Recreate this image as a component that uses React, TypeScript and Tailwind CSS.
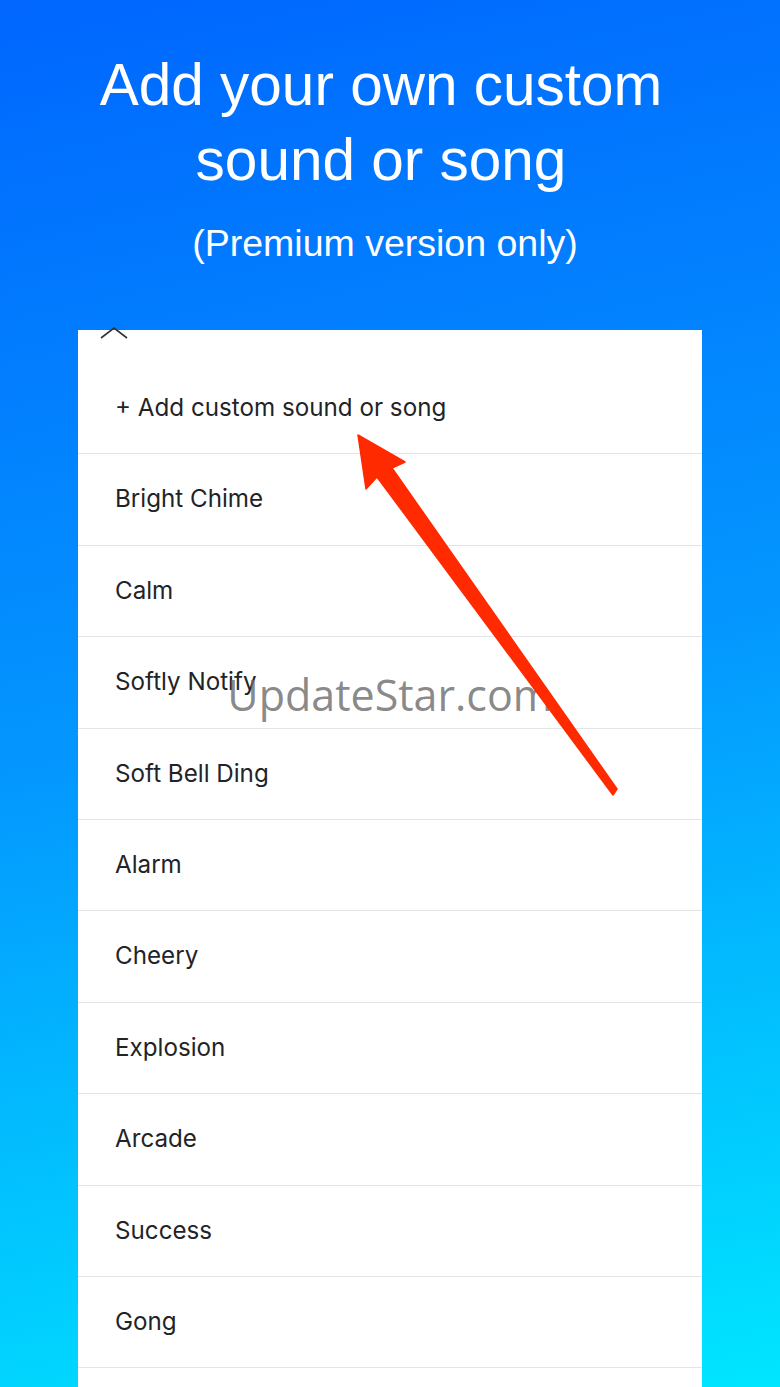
const sounds = [
  "Bright Chime",
  "Calm",
  "Softly Notify",
  "Soft Bell Ding",
  "Alarm",
  "Cheery",
  "Explosion",
  "Arcade",
  "Success",
  "Gong",
];

function Row({ label }: { label?: string }) {
  return (
    <div className="flex h-[91.4px] items-center border-b border-[#e4e4e4] pl-[37px] text-[24.2px] text-[#1f2429]">
      {label}
    </div>
  );
}

export default function App() {
  return (
    <div
      className="relative h-[1387px] w-[780px] overflow-hidden bg-linear-[168deg] from-[#0066ff] via-[#0497fe] to-[#00e6ff]"
      style={{ fontFamily: "Inter, 'Noto Sans', sans-serif" }}
    >
      <header className="flex h-[330px] flex-col items-center pr-[18px] pt-[47px] text-white">
        <h1 className="text-center font-['Liberation_Sans',Arial,sans-serif] text-[58.5px] leading-[75px]">
          Add your own custom
          <br />
          sound or song
        </h1>
        <p className="ml-[8px] mt-[24px] font-['Liberation_Sans',Arial,sans-serif] text-[37.5px] leading-[1.2]">
          (Premium version only)
        </p>
      </header>

      <div className="mx-auto w-[624px] bg-white">
        <div className="relative h-[33px]">
          <svg
            className="absolute left-[21px] top-[-3px]"
            width="30"
            height="12"
            viewBox="0 0 30 12"
            fill="none"
            stroke="#333"
            strokeWidth="1.6"
          >
            <path d="M2 11 L15 1 L28 11" />
          </svg>
        </div>
        <Row label="+ Add custom sound or song" />
        {sounds.map((s) => (
          <Row key={s} label={s} />
        ))}
        <Row />
      </div>

      {/* watermark */}
      <div className="pointer-events-none absolute left-0 right-0 top-[665px] text-center font-['Open_Sans',sans-serif] text-[43px] leading-[60px] text-[#6a6a6a]/80">
        UpdateStar.com
      </div>

      {/* red arrow */}
      <svg
        className="pointer-events-none absolute inset-0"
        width="780"
        height="1387"
        viewBox="0 0 780 1387"
      >
        <polygon
          points="358,435 405,462 392,468 617,789 613,795 377,477 366,489"
          fill="#ff2a00"
          strokeLinejoin="round"
          stroke="#ff2a00"
          strokeWidth="1.5"
        />
      </svg>
    </div>
  );
}
